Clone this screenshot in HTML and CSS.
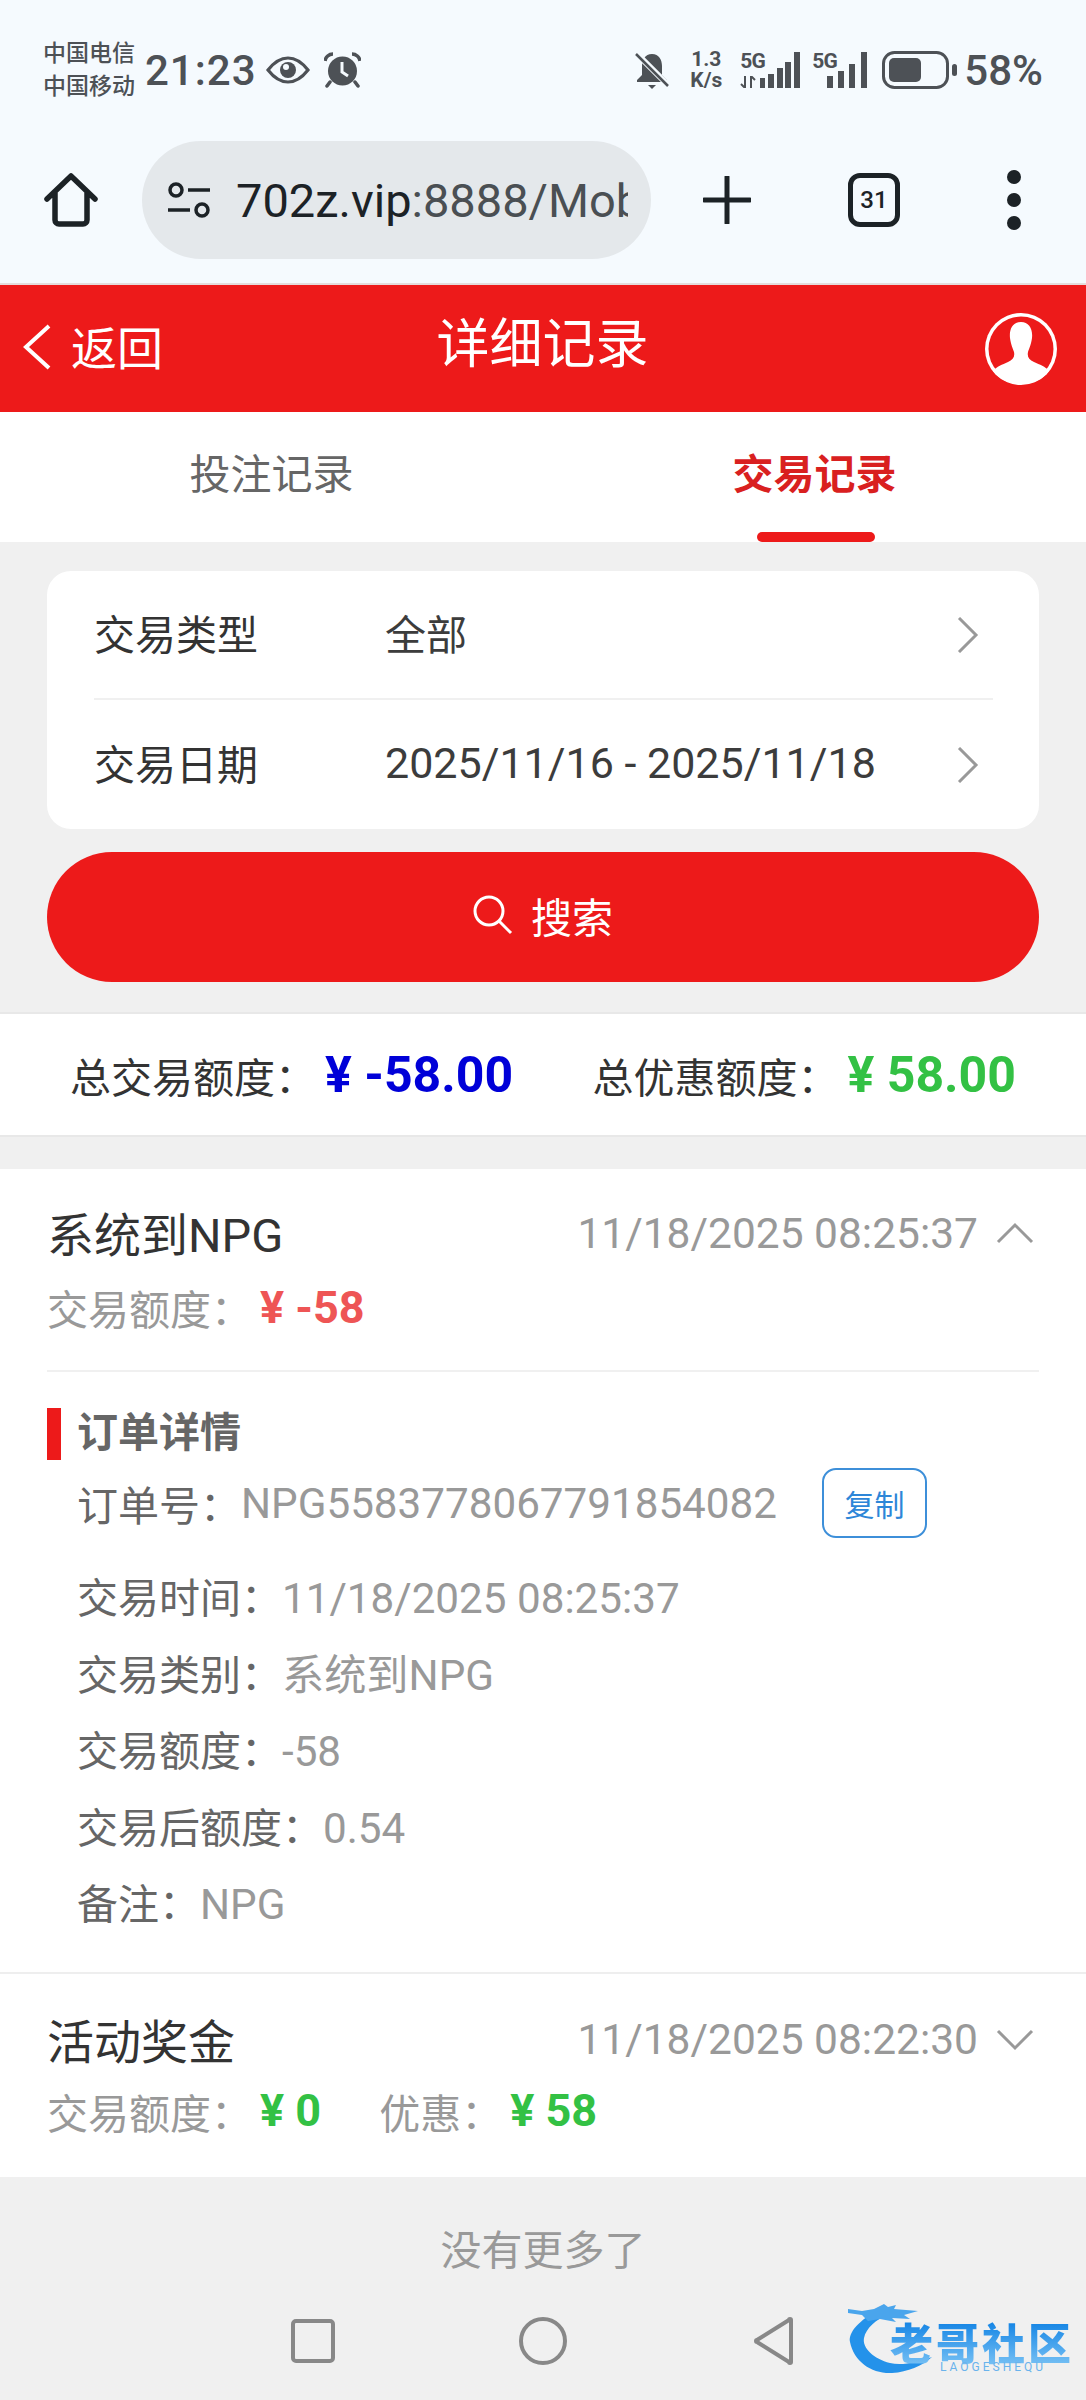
FILE: index.html
```html
<!DOCTYPE html>
<html lang="zh-CN">
<head>
    <meta charset="UTF-8">
    <meta name="viewport" content="width=device-width, initial-scale=1.0">
    <title>详细记录</title>
    <link rel="stylesheet" href="styles.css">
</head>
<body>
    <div class="chrome">
        <div class="status">
            <div class="carrier"><span>中国电信</span><span>中国移动</span></div>
            <span class="clock">21:23</span>
            <svg class="ic-eye" viewBox="0 0 44 28"><path d="M2 14C9 5 15 2 22 2s13 3 20 12c-7 9-13 12-20 12S9 23 2 14z" fill="none" stroke="#4d5156" stroke-width="3.2"/><circle cx="22" cy="14" r="8" fill="#4d5156"/><circle cx="20" cy="11" r="3" fill="#f5fafe"/></svg>
            <svg class="ic-alarm" viewBox="0 0 37 36"><circle cx="18.500" cy="19" r="14.500" fill="#4d5156"/><path d="M1 9a8 8 0 0 1 8-7M36 9a8 8 0 0 0-8-7" fill="none" stroke="#4d5156" stroke-width="3.500"/><path d="M6 30l-3 4M31 30l3 4" stroke="#4d5156" stroke-width="3.500" stroke-linecap="round"/><path d="M18 10v10l6 4" fill="none" stroke="#f5fafe" stroke-width="3"/></svg>
            <span class="status-gap"></span>
            <svg class="ic-bell" viewBox="0 0 36 38"><path d="M18 3c-7 0-10 6-10 12v9l-5 5v2h30v-2l-5-5v-9c0-6-3-12-10-12z" fill="#4d5156"/><path d="M14 34h8l-4 4z" fill="#4d5156"/><path d="M2 2l32 32" stroke="#f5fafe" stroke-width="6"/><path d="M2 3l32 32" stroke="#4d5156" stroke-width="2.500"/></svg>
            <div class="speed"><span>1.3</span><span>K/s</span></div>
            <div class="signal wide">
                <span class="five-g">5G</span>
                <svg class="ic-updown" viewBox="0 0 16 12"><path d="M5 0v12M5 12L1 8M11 12V0M11 0l4 4" fill="none" stroke="#4d5156" stroke-width="2"/></svg>
                <svg class="ic-bars" viewBox="0 0 40 36"><path d="M0 26h5v10H0zM8 22h6v14H8zM17 16h6v20h-6zM25 10h6v26h-6zM34 0h6v36h-6z" fill="#4d5156"/></svg>
            </div>
            <div class="signal narrow">
                <span class="five-g">5G</span>
                <svg class="ic-bars" viewBox="0 0 40 36"><path d="M0 24h6v12H0zM11 19h6v17h-6zM22 12h6v24h-6zM34 0h6v36h-6z" fill="#4d5156"/></svg>
            </div>
            <svg class="ic-battery" viewBox="0 0 76 38"><rect x="1.500" y="1.500" width="64" height="35" rx="11" fill="none" stroke="#4d5156" stroke-width="3"/><rect x="7" y="7" width="32" height="24" rx="5" fill="#4d5156"/><rect x="70" y="13" width="5" height="12" rx="2.500" fill="#4d5156"/></svg>
            <span class="percent">58%</span>
        </div>
        <div class="toolbar">
            <svg class="ic-home" viewBox="0 0 54 54"><path d="M3 26L27 3l24 23M11 20v27a4 4 0 0 0 4 4h24a4 4 0 0 0 4-4V20" fill="none" stroke="#1c2226" stroke-width="5.500" stroke-linecap="round" stroke-linejoin="round"/></svg>
            <div class="address">
                <svg class="ic-tune" viewBox="0 0 44 36"><circle cx="9" cy="8" r="6" fill="none" stroke="#1c2226" stroke-width="3.500"/><path d="M21 8h22M1 28h22" stroke="#1c2226" stroke-width="3.500"/><circle cx="35" cy="28" r="6" fill="none" stroke="#1c2226" stroke-width="3.500"/></svg>
                <span class="url">702z.vip<span class="url-path">:8888/Mobile</span></span>
            </div>
            <svg class="ic-plus" viewBox="0 0 48 48"><path d="M24 1v46M1 24h46" stroke="#1c2226" stroke-width="5" stroke-linecap="round"/></svg>
            <div class="tab-count">31</div>
            <div class="dots"><i></i><i></i><i></i></div>
        </div>
    </div>

    <header class="topbar">
        <a class="back">
            <svg class="ic-back" viewBox="0 0 28 46"><path d="M26 2L3 23l23 21" fill="none" stroke="#fff" stroke-width="4"/></svg>
            <span>返回</span>
        </a>
        <h1>详细记录</h1>
        <svg class="ic-user" viewBox="0 0 72 72"><circle cx="36" cy="36" r="36" fill="#fff"/><circle cx="36" cy="36" r="32.500" fill="#ed1a1a"/><path d="M36 9c8 0 12 7 11 16-1 7-3 11-4 14-1 5 1 8 6 10 6 3 11 4 15 9-6 8-16 13-28 13S14 66 8 58c4-5 9-6 15-9 5-2 7-5 6-10-1-3-3-7-4-14C24 16 28 9 36 9z" fill="#fff"/></svg>
    </header>

    <nav class="tabs">
        <a class="tab">投注记录</a>
        <a class="tab active">交易记录</a>
    </nav>

    <section class="filter">
        <div class="filter-row">
            <span class="filter-label">交易类型</span>
            <span class="filter-value">全部</span>
            <svg class="ic-next" viewBox="0 0 22 36"><path d="M2 1l17 17L2 35" fill="none" stroke="#999" stroke-width="3"/></svg>
        </div>
        <div class="filter-row">
            <span class="filter-label">交易日期</span>
            <span class="filter-value date">2025/11/16 - 2025/11/18</span>
            <svg class="ic-next" viewBox="0 0 22 36"><path d="M2 1l17 17L2 35" fill="none" stroke="#999" stroke-width="3"/></svg>
        </div>
    </section>

    <button class="search">
        <svg class="ic-search" viewBox="0 0 40 40"><circle cx="16" cy="16" r="14" fill="none" stroke="#fff" stroke-width="3"/><path d="M26 26l12 12" stroke="#fff" stroke-width="3"/></svg>
        <span>搜索</span>
    </button>

    <section class="summary">
        <div class="sum"><span>总交易额度：</span><b class="blue">¥ -58.00</b></div>
        <div class="sum"><span>总优惠额度：</span><b class="green">¥ 58.00</b></div>
    </section>

    <section class="records">
        <article class="record">
            <div class="record-head">
                <h2>系统到NPG</h2>
                <span class="record-time">11/18/2025 08:25:37</span>
                <svg class="ic-fold" viewBox="0 0 38 22"><path d="M2 20L19 3l17 17" fill="none" stroke="#999" stroke-width="3"/></svg>
            </div>
            <div class="record-amount">
                <span>交易额度：</span><b class="red">¥ -58</b>
            </div>
            <div class="detail">
                <h3>订单详情</h3>
                <div class="order-row">
                    <span class="key">订单号：</span><span class="val">NPG5583778067791854082</span>
                    <button class="copy">复制</button>
                </div>
                <p class="line"><span class="key">交易时间：</span><span class="val">11/18/2025 08:25:37</span></p>
                <p class="line"><span class="key">交易类别：</span><span class="val">系统到NPG</span></p>
                <p class="line"><span class="key">交易额度：</span><span class="val">-58</span></p>
                <p class="line"><span class="key">交易后额度：</span><span class="val">0.54</span></p>
                <p class="line"><span class="key">备注：</span><span class="val">NPG</span></p>
            </div>
        </article>
        <article class="record second">
            <div class="record-head">
                <h2>活动奖金</h2>
                <span class="record-time">11/18/2025 08:22:30</span>
                <svg class="ic-fold" viewBox="0 0 38 22"><path d="M2 2l17 17L36 2" fill="none" stroke="#999" stroke-width="3"/></svg>
            </div>
            <div class="record-amount">
                <span>交易额度：</span><b class="green">¥ 0</b>
                <span class="bonus">优惠：</span><b class="green">¥ 58</b>
            </div>
        </article>
    </section>

    <div class="no-more">没有更多了</div>

    <div class="navbar">
        <svg class="ic-square" viewBox="0 0 44 44"><rect x="2" y="2" width="40" height="40" rx="3" fill="none" stroke="#888" stroke-width="4"/></svg>
        <svg class="ic-circle" viewBox="0 0 48 48"><circle cx="24" cy="24" r="22" fill="none" stroke="#888" stroke-width="4"/></svg>
        <svg class="ic-triangle" viewBox="0 0 42 48"><path d="M38 3v42a1 1 0 0 1-2 0L4 25a1 1 0 0 1 0-2L36 3a1 1 0 0 1 2 0z" fill="none" stroke="#888" stroke-width="4" stroke-linejoin="round"/></svg>
    </div>

    <div class="watermark">
        <svg class="dragon" viewBox="0 0 220 78"><path d="M30 10C12 20 0 32 2 42c4 20 22 32 42 31 16-1 30-7 40-16-14 5-30 9-42 6-16-4-28-15-26-25 2-10 12-18 24-24z" fill="#2492ea"/><path d="M0 9l14 2 12-2 10-5 4 3 8-2-2 4 24 2-14 4 6 4-18-1 4 4-16-3-12 2-6-6-14-2z" fill="#4aa5ec"/></svg>
        <div class="wm-title">老哥社区</div>
        <div class="wm-sub">LAOGESHEQU</div>
    </div>
</body>
</html>
```

FILE: styles.css
```css
* {
    box-sizing: border-box;
}
html, body {
    margin: 0;
    padding: 0;
}
body {
    position: relative;
    width: 1086px;
    height: 2400px;
    overflow: hidden;
    background-color: #f0f0f0;
    color: #333;
    font-family: Roboto, "Noto Sans CJK SC", sans-serif;
    font-size: 41px;
}
svg {
    display: block;
    flex: none;
}
h1, h2, h3, p {
    margin: 0;
    font-weight: normal;
}

/* phone status bar + browser toolbar */
.chrome {
    height: 285px;
    padding-top: 37px;
    background-color: #f5fafe;
    border-bottom: 2px solid #e4dcdc;
}
.status {
    display: flex;
    align-items: center;
    height: 66px;
    padding: 0 43px;
    color: #4d5156;
}
.carrier {
    display: flex;
    flex-direction: column;
    width: 102px;
    font-size: 23px;
    line-height: 33px;
    font-weight: 500;
}
.clock {
    width: 121px;
    font-size: 42px;
    font-weight: 500;
    letter-spacing: 1px;
}
.ic-eye {
    width: 44px;
    height: 28px;
    margin-right: 14px;
}
.ic-alarm {
    width: 37px;
    height: 36px;
}
.status-gap {
    flex: 1;
}
.ic-bell {
    width: 36px;
    height: 38px;
    margin-right: 17px;
}
.speed {
    display: flex;
    flex-direction: column;
    align-items: center;
    width: 38px;
    margin-right: 15px;
    font-size: 21px;
    line-height: 21px;
    font-weight: 700;
    white-space: nowrap;
}
.signal {
    position: relative;
    width: 60px;
    height: 36px;
    margin-right: 12px;
}
.signal.narrow {
    width: 55px;
    margin-right: 15px;
}
.five-g {
    position: absolute;
    left: 0;
    top: -2px;
    font-size: 21px;
    line-height: 22px;
    font-weight: 700;
    letter-spacing: -1px;
}
.ic-updown {
    position: absolute;
    left: 0;
    bottom: 0;
    width: 16px;
    height: 12px;
}
.ic-bars {
    position: absolute;
    right: 0;
    top: 0;
    width: 40px;
    height: 36px;
}
.ic-battery {
    width: 76px;
    height: 38px;
    margin-right: 6px;
}
.percent {
    font-size: 42px;
    font-weight: 500;
}
.toolbar {
    display: flex;
    align-items: center;
    height: 118px;
    margin-top: 38px;
    padding-left: 44px;
}
.ic-home {
    width: 54px;
    height: 54px;
    margin-right: 44px;
}
.address {
    display: flex;
    align-items: center;
    width: 509px;
    height: 118px;
    padding: 0 23px 0 25px;
    border-radius: 59px;
    background-color: #e4e8eb;
}
.ic-tune {
    width: 44px;
    height: 36px;
    margin-right: 25px;
}
.url {
    flex: 1;
    overflow: hidden;
    white-space: nowrap;
    font-size: 47px;
    color: #1c2226;
}
.url-path {
    color: #4a4f53;
}
.ic-plus {
    width: 48px;
    height: 48px;
    margin: 0 97px 0 52px;
}
.tab-count {
    width: 52px;
    height: 54px;
    margin-right: 107px;
    border: 5px solid #1c2226;
    border-radius: 12px;
    font-size: 24px;
    font-weight: 500;
    line-height: 44px;
    text-align: center;
    color: #1c2226;
}
.dots {
    display: flex;
    flex-direction: column;
    gap: 9px;
}
.dots i {
    display: block;
    width: 14px;
    height: 14px;
    border-radius: 50%;
    background-color: #1c2226;
}

/* red header */
.topbar {
    display: grid;
    grid-template-columns: 1fr auto 1fr;
    align-items: center;
    height: 127px;
    padding: 0 29px 0 23px;
    background-color: #ed1a1a;
    color: #fff;
}
.back {
    display: flex;
    align-items: center;
    padding-bottom: 4px;
    font-size: 46px;
}
.back span {
    margin-top: -4px;
}
.ic-back {
    width: 28px;
    height: 46px;
    margin-right: 20px;
}
.topbar h1 {
    margin-top: -8px;
    margin-left: 5px;
    font-size: 53px;
    line-height: 60px;
}
.ic-user {
    justify-self: end;
    width: 72px;
    height: 72px;
}

/* tabs */
.tabs {
    display: flex;
    height: 130px;
    background-color: #fff;
}
.tab {
    position: relative;
    flex: 1;
    padding-top: 33px;
    line-height: 60px;
    text-align: center;
    color: #666;
}
.tab.active {
    color: #d9201f;
    font-weight: 700;
}
.tab.active::after {
    content: "";
    position: absolute;
    left: 214px;
    bottom: 0;
    width: 118px;
    height: 10px;
    border-radius: 5px;
    background-color: #ed1a1a;
}

/* filter card */
.filter {
    margin: 29px 47px 0;
    padding: 0 46px 0 47px;
    border-radius: 24px;
    background-color: #fff;
}
.filter-row {
    display: flex;
    align-items: center;
    height: 129px;
}
.filter-row:first-child {
    border-bottom: 2px solid #f0f0f0;
}
.filter-label {
    width: 291px;
    margin-top: -5px;
}
.filter-value {
    flex: 1;
    margin-top: -5px;
    color: #3c3c3c;
}
.filter-value.date {
    margin-top: -3px;
    font-size: 43px;
}
.ic-next {
    width: 22px;
    height: 36px;
    margin-right: 14px;
}
.search {
    display: flex;
    align-items: center;
    justify-content: center;
    width: 992px;
    height: 130px;
    margin: 23px 47px 0;
    padding: 0 0 5px;
    border: none;
    border-radius: 65px;
    background-color: #ed1a1a;
    color: #fff;
    font: inherit;
}
.ic-search {
    width: 40px;
    height: 40px;
    margin-right: 18px;
}

/* totals */
.summary {
    display: flex;
    justify-content: space-between;
    align-items: center;
    height: 125px;
    margin-top: 30px;
    padding: 0 70px;
    background-color: #fff;
    border-top: 2px solid #e8e8e8;
    border-bottom: 2px solid #e8e8e8;
}
.sum {
    display: flex;
    align-items: center;
}
.sum b {
    margin-left: 9px;
    font-size: 50px;
}
.blue {
    color: #0000d8;
}
.green {
    color: #33c144;
}
.red {
    color: #ee5555;
}

/* record list */
.records {
    margin-top: 32px;
    background-color: #fff;
}
.record {
    padding: 34px 47px 28px;
}
.record.second {
    padding: 36px 47px 36px;
    border-top: 2px solid #eee;
}
.record-head {
    display: flex;
    align-items: center;
    height: 60px;
}
.record-head h2 {
    flex: 1;
    margin-top: -3px;
    font-size: 47px;
    color: #333;
}
.record-time {
    font-size: 42.500px;
    color: #999;
}
.ic-fold {
    width: 38px;
    height: 22px;
    margin: 0 5px 0 18px;
}
.record-amount {
    display: flex;
    align-items: center;
    height: 60px;
    margin-top: 14px;
    color: #999;
}
.record.second .record-amount {
    margin-top: 11px;
}
.record-amount b {
    font-size: 45px;
    margin-left: 8px;
}
.bonus {
    margin-left: 58px;
}
.detail {
    margin-top: 33px;
    border-top: 2px solid #f0f0f0;
}
.detail h3 {
    height: 52px;
    margin-top: 36px;
    padding-left: 16px;
    border-left: 14px solid #ed1a1a;
    font-size: 41px;
    line-height: 50px;
    font-weight: 700;
    color: #666;
}
.order-row {
    display: flex;
    align-items: center;
    height: 70px;
    margin-top: 8px;
    padding-left: 30px;
}
.key {
    color: #666;
}
.val {
    font-size: 42.200px;
    color: #999;
}
.copy {
    width: 105px;
    height: 70px;
    margin-left: 45px;
    padding: 0;
    border: 2px solid #3d8fd9;
    border-radius: 14px;
    background-color: #fff;
    color: #2d86d8;
    font: inherit;
    font-size: 30px;
}
.line {
    height: 76.500px;
    padding-left: 30px;
    line-height: 76.500px;
}
.order-row + .line {
    margin-top: 23px;
}

.no-more {
    margin-top: 44px;
    line-height: 60px;
    text-align: center;
    color: #999;
}
.navbar {
    display: flex;
    align-items: center;
    height: 48px;
    margin-top: 36px;
    padding-left: 291px;
}
.ic-square {
    width: 44px;
    height: 44px;
    margin-right: 184px;
}
.ic-circle {
    width: 48px;
    height: 48px;
    margin-right: 186px;
}
.ic-triangle {
    width: 42px;
    height: 48px;
}

/* forum stamp over the nav bar */
.watermark {
    position: absolute;
    left: 848px;
    top: 2300px;
    width: 222px;
    height: 78px;
}
.dragon {
    width: 220px;
    height: 78px;
}
.wm-title {
    position: absolute;
    left: 42px;
    top: 22px;
    font-size: 43px;
    line-height: 46px;
    font-weight: 900;
    letter-spacing: 3px;
    white-space: nowrap;
    background: linear-gradient(#1585e5, #7cc4f5);
    -webkit-background-clip: text;
    background-clip: text;
    color: transparent;
}
.wm-sub {
    position: absolute;
    left: 92px;
    top: 60px;
    font-size: 12px;
    letter-spacing: 3px;
    line-height: 14px;
    white-space: nowrap;
    color: #6ab3ec;
}
```
